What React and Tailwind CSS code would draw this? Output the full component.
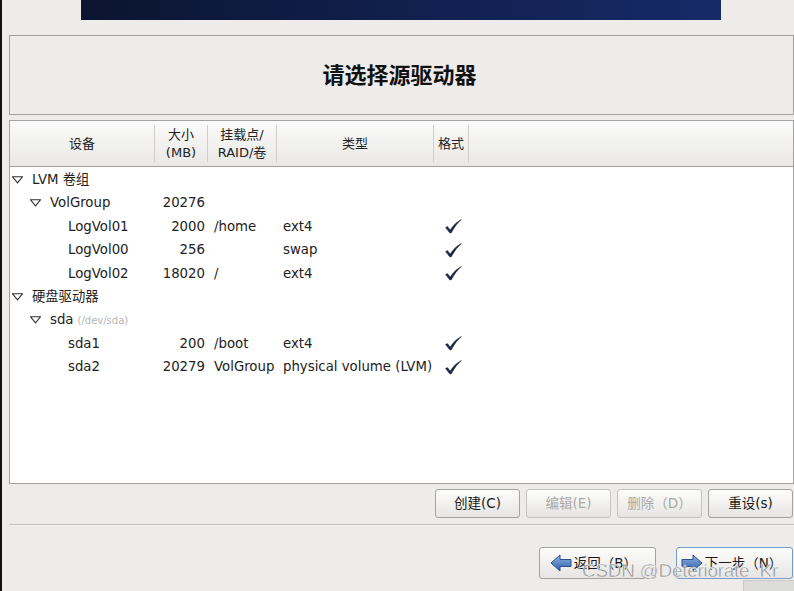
const cjk = { fontFamily: '"DejaVu Sans", "Noto Sans CJK SC", sans-serif' };

const cols = "grid grid-cols-[145px_53px_69px_157px_35px_1fr]";

const Tri = () => (
  <svg width="11" height="8" viewBox="0 0 11 8" className="shrink-0">
    <polygon points="0.5,0.8 10.5,0.8 5.5,6.8" fill="none" stroke="#2e2e2e" strokeWidth="1.1" />
  </svg>
);

const Check = () => (
  <svg width="17" height="15" viewBox="0 0 17 15">
    <path d="M0.6 8.6 L2.4 7.6 L5.2 10.9 Q9.5 4 16.4 0.4 Q10.5 5.5 6.2 13.9 L4.8 13.9 Z" fill="#1c2640" stroke="#1c2640" strokeWidth="0.5" strokeLinejoin="round" />
  </svg>
);

const rows = [
  { level: 0, tri: true, name: "LVM 卷组" },
  { level: 1, tri: true, name: "VolGroup", size: "20276" },
  { level: 2, name: "LogVol01", size: "2000", mount: "/home", type: "ext4", fmt: true },
  { level: 2, name: "LogVol00", size: "256", type: "swap", fmt: true },
  { level: 2, name: "LogVol02", size: "18020", mount: "/", type: "ext4", fmt: true },
  { level: 0, tri: true, name: "硬盘驱动器" },
  { level: 1, tri: true, name: "sda", sub: "(/dev/sda)" },
  { level: 2, name: "sda1", size: "200", mount: "/boot", type: "ext4", fmt: true },
  { level: 2, name: "sda2", size: "20279", mount: "VolGroup", type: "physical volume (LVM)", fmt: true },
];

const indent = ["pl-[2px]", "pl-[20px]", "pl-[58px]"];

const Btn = ({ children, disabled, className = "" }) => (
  <button
    className={
      "h-[29px] w-[85px] rounded-[3px] border bg-gradient-to-b from-[#fdfdfc] to-[#e6e5e3] text-[13.5px] " +
      (disabled ? "text-[#a9a9a7] border-[#c4c3c0]" : "text-[#1a1a1a] border-[#a3a3a0]") +
      " " + className
    }
  >
    {children}
  </button>
);

const ArrowLeft = () => (
  <svg width="22" height="18" viewBox="0 0 22 18">
    <defs>
      <linearGradient id="al" x1="0" y1="0" x2="0" y2="1">
        <stop offset="0" stopColor="#8fb3e3" />
        <stop offset="1" stopColor="#2f5ea8" />
      </linearGradient>
    </defs>
    <path d="M1 9 L10 1 L10 5.5 L21 5.5 L21 12.5 L10 12.5 L10 17 Z" fill="url(#al)" stroke="#2a4f8e" strokeWidth="1" strokeLinejoin="round" />
  </svg>
);

const ArrowRight = () => (
  <svg width="22" height="18" viewBox="0 0 22 18">
    <defs>
      <linearGradient id="ar" x1="0" y1="0" x2="0" y2="1">
        <stop offset="0" stopColor="#8fb3e3" />
        <stop offset="1" stopColor="#2f5ea8" />
      </linearGradient>
    </defs>
    <path d="M21 9 L12 1 L12 5.5 L1 5.5 L1 12.5 L12 12.5 L12 17 Z" fill="url(#ar)" stroke="#2a4f8e" strokeWidth="1" strokeLinejoin="round" />
  </svg>
);

export default function App() {
  return (
    <div className="relative w-[794px] h-[591px] overflow-hidden bg-[#edecea] border-l-2 border-[#111]" style={cjk}>
      {/* banner */}
      <div className="ml-[79px] w-[640px] h-[20px] bg-gradient-to-r from-[#0b1530] via-[#111f4d] to-[#172a68]" />

      {/* title */}
      <div className="mt-[15px] ml-[7px] w-[785px] h-[80px] border border-[#a3a29f] flex items-center justify-center">
        <h1 className="text-[22px] font-semibold text-[#111] pr-[4px]">请选择源驱动器</h1>
      </div>

      {/* table */}
      <div className="mt-[5px] ml-[7px] w-[785px] h-[364px] border border-[#a3a29f] bg-white flex flex-col">
        <div className={cols + " h-[46px] bg-gradient-to-b from-[#fbfbfb] to-[#e9e8e6] border-b border-[#a3a29f] text-[13px] text-[#222]"}>
          <div className="flex items-center justify-center border-r border-[#cfceca] my-[4px]">设备</div>
          <div className="flex flex-col items-center justify-center leading-[18px] border-r border-[#cfceca] my-[4px]">
            <span>大小</span>
            <span>(MB)</span>
          </div>
          <div className="flex flex-col items-center justify-center leading-[18px] border-r border-[#cfceca] my-[4px]">
            <span>挂载点/</span>
            <span>RAID/卷</span>
          </div>
          <div className="flex items-center justify-center border-r border-[#cfceca] my-[4px]">类型</div>
          <div className="flex items-center justify-center border-r border-[#cfceca] my-[4px]">格式</div>
          <div />
        </div>
        <div className="pt-[1px] text-[13.3px] text-[#222]">
          {rows.map((r, i) => (
            <div key={i} className={cols + " h-[23.45px] items-center"}>
              <div className={"flex items-center " + indent[r.level]}>
                {r.tri && <Tri />}
                <span className={r.tri ? "ml-[9px]" : ""}>{r.name}</span>
                {r.sub && <span className="ml-[4px] text-[10px] text-[#b5b5b3]">{r.sub}</span>}
              </div>
              <div className="text-right pr-[3px]">{r.size}</div>
              <div className="pl-[6px] whitespace-nowrap">{r.mount}</div>
              <div className="pl-[6px] whitespace-nowrap">{r.type}</div>
              <div className="flex justify-center pl-[4px]">{r.fmt && <Check />}</div>
              <div />
            </div>
          ))}
        </div>
      </div>

      {/* action buttons */}
      <div className="mt-[5px] flex justify-end gap-[6px] pr-[1px]">
        <Btn>创建(C)</Btn>
        <Btn disabled>编辑(E)</Btn>
        <Btn disabled>删除（D）</Btn>
        <Btn>重设(s)</Btn>
      </div>

      <div className="mt-[6px] ml-[7px] h-[2px] border-t border-[#bfbebb] bg-[#f7f7f6]" />

      {/* nav buttons */}
      <div className="mt-[21px] flex justify-end gap-[20px] pr-[1px]">
        <button className="h-[32px] w-[117px] rounded-[3px] border border-[#a3a3a0] bg-gradient-to-b from-[#fdfdfc] to-[#e6e5e3] text-[13.5px] text-[#1a1a1a] flex items-center justify-center gap-[2px] pr-[8px]">
          <ArrowLeft />
          <span>返回（B）</span>
        </button>
        <button className="h-[32px] w-[117px] rounded-[3px] border border-[#7a9cc8] bg-gradient-to-b from-[#fdfdfc] to-[#e6e5e3] text-[13.5px] text-[#1a1a1a] flex items-center justify-center gap-[2px] pr-[6px]">
          <ArrowRight />
          <span>下一步（N）</span>
        </button>
      </div>

      {/* watermark */}
      <div
        className="absolute left-[580px] top-[557px] text-[19px] text-[#8e8e8e] whitespace-nowrap tracking-[-0.3px]"
        style={{ fontFamily: '"Liberation Sans", Arial, sans-serif', WebkitTextStroke: "0.4px #ffffff" }}
      >
        CSDN @Deteriorate_Kr
      </div>
      <div className="absolute left-[741px] top-[580px] w-[60px] h-[14px] bg-[#dcdcda] border-t border-l border-[#c8c8c6]" />
    </div>
  );
}
